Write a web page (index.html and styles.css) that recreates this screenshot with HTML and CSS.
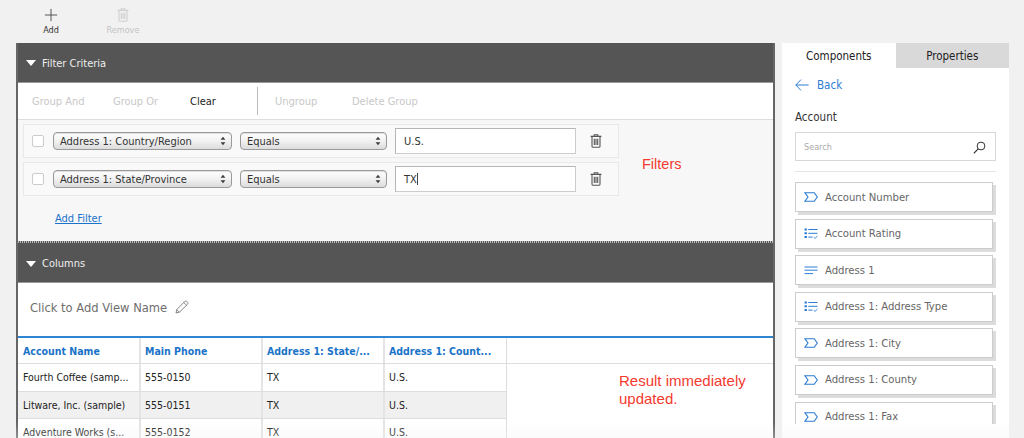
FILE: index.html
```html
<!DOCTYPE html>
<html lang="en">
<head>
<meta charset="utf-8">
<title>View Designer</title>
<link rel="stylesheet" href="styles.css">
</head>
<body>
<svg class="defs" width="0" height="0">
  <symbol id="i-text" viewBox="0 0 14 10"><path d="M.8 .7H10.2L13.3 5 10.2 9.3H.8L4 5Z" fill="none" stroke="#2b7cd3" stroke-width="1.1"/></symbol>
  <symbol id="i-list" viewBox="0 0 14 11"><path d="M.5.5h2.4v2H.5zM.5 4.3h2.4v2H.5zM.5 8.1h2.4v2H.5z" fill="#2b7cd3"/><path d="M4.3 1.5H13.5M4.3 5.3H13.5M4.3 9.1H8.5" fill="none" stroke="#2b7cd3"/><path d="M9.8 9.2l1.3 1.2 2.4-2.4" fill="none" stroke="#2b7cd3" stroke-width=".9"/></symbol>
  <symbol id="i-lines" viewBox="0 0 14 9"><path d="M.5 1H13.5M.5 4.2H13.5M.5 7.6H9" fill="none" stroke="#2b7cd3" stroke-width="1"/></symbol>
  <symbol id="i-trash" viewBox="0 0 12 14"><path d="M4.2 1.9V.8H7.8V1.9M.6 2.4H11.4M2 2.6V12.2Q2 13.3 3.1 13.3H8.9Q10 13.3 10 12.2V2.6" fill="none" stroke="currentColor" stroke-width="1.1"/><path d="M4.3 4.8V11M6 4.8V11M7.7 4.8V11" fill="none" stroke="currentColor" stroke-width="1.1"/></symbol>
  <symbol id="i-updown" viewBox="0 0 7 11"><path d="M3.5.5L6.3 4H.7ZM3.5 10.5L.7 7H6.3Z" fill="#3c3c3c"/></symbol>
</svg>

<header class="toolbar">
  <button class="tool">
    <svg class="tool-icon" viewBox="0 0 16 16"><path d="M8 1V15M1 8H15" fill="none" stroke="#444" stroke-width="1"/></svg>
    <span>Add</span>
  </button>
  <button class="tool tool-off">
    <svg class="tool-icon" viewBox="0 0 12 14"><use href="#i-trash"/></svg>
    <span>Remove</span>
  </button>
</header>

<div class="workspace">
  <main class="designer">
    <section class="bar"><span class="caret"></span>Filter Criteria</section>
    <div class="actions">
      <span class="action off w-and">Group And</span>
      <span class="action off w-or">Group Or</span>
      <span class="action w-clear">Clear</span>
      <span class="action-sep"></span>
      <span class="action off w-ungroup">Ungroup</span>
      <span class="action off">Delete Group</span>
    </div>
    <div class="filters">
      <div class="filter-row">
        <span class="check"></span>
        <div class="select sel-field">Address 1: Country/Region<svg class="updown"><use href="#i-updown"/></svg></div>
        <div class="select sel-op">Equals<svg class="updown"><use href="#i-updown"/></svg></div>
        <div class="value">U.S.</div>
        <svg class="trash"><use href="#i-trash"/></svg>
      </div>
      <div class="filter-row">
        <span class="check"></span>
        <div class="select sel-field">Address 1: State/Province<svg class="updown"><use href="#i-updown"/></svg></div>
        <div class="select sel-op">Equals<svg class="updown"><use href="#i-updown"/></svg></div>
        <div class="value">TX<span class="cursor"></span></div>
        <svg class="trash"><use href="#i-trash"/></svg>
      </div>
      <a class="add-filter" href="#">Add Filter</a>
      <span class="note note-filters">Filters</span>
    </div>
    <div class="dots"></div>
    <section class="bar bar-columns"><span class="caret"></span>Columns</section>
    <div class="view-name">Click to Add View Name
      <svg class="pencil" viewBox="0 0 14 14"><path d="M1 13L1.8 9.6 9.8 1.4Q10.7.6 11.6 1.3L12.7 2.4Q13.4 3.3 12.6 4.2L4.4 12.2ZM1.8 9.6L4.4 12.2M8.8 2.5L11.5 5.2" fill="none" stroke="#777" stroke-width=".9"/></svg>
    </div>
    <div class="grid">
      <div class="grid-row grid-head">
        <div class="cell">Account Name</div><div class="cell">Main Phone</div><div class="cell">Address 1: State/...</div><div class="cell">Address 1: Count...</div>
      </div>
      <div class="grid-row">
        <div class="cell">Fourth Coffee (samp...</div><div class="cell">555-0150</div><div class="cell">TX</div><div class="cell">U.S.</div>
      </div>
      <div class="grid-row grid-alt">
        <div class="cell">Litware, Inc. (sample)</div><div class="cell">555-0151</div><div class="cell">TX</div><div class="cell">U.S.</div>
      </div>
      <div class="grid-row">
        <div class="cell">Adventure Works (s...</div><div class="cell">555-0152</div><div class="cell">TX</div><div class="cell">U.S.</div>
      </div>
      <span class="note note-result">Result immediately<br>updated.</span>
    </div>
  </main>

  <aside class="side">
    <div class="tabs"><div class="tab tab-on">Components</div><div class="tab">Properties</div></div>
    <div class="side-body">
      <a class="back" href="#"><svg class="back-arrow" viewBox="0 0 14 12"><path d="M6 .6L.8 6 6 11.4M.8 6H13.6" fill="none" stroke="#2b7cd3" stroke-width="1"/></svg>Back</a>
      <div class="entity">Account</div>
      <div class="search"><span>Search</span>
        <svg class="search-icon" viewBox="0 0 13 13"><circle cx="8" cy="5" r="3.9" fill="none" stroke="#333" stroke-width="1"/><path d="M5.2 7.8L.8 12.3" fill="none" stroke="#333" stroke-width="1.2"/></svg>
      </div>
      <div class="side-rule"></div>
      <div class="comp"><svg class="c-text"><use href="#i-text"/></svg>Account Number</div>
      <div class="comp"><svg class="c-list"><use href="#i-list"/></svg>Account Rating</div>
      <div class="comp"><svg class="c-lines"><use href="#i-lines"/></svg>Address 1</div>
      <div class="comp"><svg class="c-list"><use href="#i-list"/></svg>Address 1: Address Type</div>
      <div class="comp"><svg class="c-text"><use href="#i-text"/></svg>Address 1: City</div>
      <div class="comp"><svg class="c-text"><use href="#i-text"/></svg>Address 1: County</div>
      <div class="comp"><svg class="c-text"><use href="#i-text"/></svg>Address 1: Fax</div>
    </div>
  </aside>
</div>
<div class="fade"></div>
</body>
</html>
```

FILE: styles.css
```css
* { box-sizing: border-box; }
html, body { margin: 0; height: 438px; overflow: hidden; }
body {
  position: relative;
  background: #f1f1f1;
  font-family: "DejaVu Sans", sans-serif;
  font-stretch: condensed;
  font-size: 11px;
  color: #333;
}
.defs { position: absolute; }

.toolbar { height: 43px; padding-left: 30px; display: flex; gap: 30px; }
.tool {
  width: 42px; padding: 8px 0 0; border: 0; background: none;
  display: flex; flex-direction: column; align-items: center;
  font-family: inherit; font-stretch: condensed; font-size: 9px; color: #333;
}
.tool-off { color: #c4c4c4; }
.tool-icon { width: 14px; height: 14px; margin-bottom: 3px; }
.tool-off .tool-icon { color: #cfcfcf; }

.workspace { display: flex; padding-left: 16px; align-items: flex-start; }
.designer {
  position: relative;
  width: 759px; height: 395px;
  background: #fff;
  border-left: 2px solid #666;
  border-right: 2px solid #666;
  overflow: hidden;
}
.bar {
  height: 40px; background: #555; color: #eee;
  display: flex; align-items: center;
  padding: 1px 0 0 8px; font-size: 11px;
  border-bottom: 1px solid #999;
}
.bar-columns { padding-top: 2px; }
.caret {
  width: 0; height: 0; margin-right: 6px;
  border: 5px solid transparent; border-top: 6px solid #fff; border-bottom: 0;
}
.actions {
  height: 37px; padding-left: 14px;
  display: flex; align-items: center;
  font-size: 11px; color: #222;
  border-bottom: 1px solid #ddd;
}
.action { display: block; }
.off { color: #c8c8c8; }
.w-and { width: 81px; }
.w-or { width: 77px; }
.w-clear { width: 67px; }
.w-ungroup { width: 77px; }
.action-sep { width: 1px; height: 28px; background: #bbb; margin-right: 17px; }

.filters { position: relative; height: 121px; background: #f7f7f7; padding: 4px 0 0 5px; }
.filter-row {
  width: 596px; height: 34px; margin-bottom: 4px;
  display: flex; align-items: center; padding-left: 8px;
  background: #f9f9f9; border: 1px solid #e9e9e9;
}
.check { width: 12px; height: 12px; border: 1px solid #ccc; border-radius: 2px; background: #fff; margin-right: 9px; }
.select {
  position: relative; height: 18px; padding-left: 6px; line-height: 18px;
  border: 1px solid #9a9a9a; border-radius: 4px;
  background: linear-gradient(#fff, #f1f1f1 50%, #dcdcdc);
  box-shadow: inset 0 1px 1px #ddd;
  font-size: 11px; color: #333;
}
.sel-field { width: 179px; margin-right: 8px; }
.sel-op { width: 147px; margin-right: 8px; }
.updown { position: absolute; right: 5px; top: 3px; width: 6px; height: 10px; }
.value {
  width: 181px; height: 26px; padding-left: 8px; line-height: 26px;
  background: #fff; border: 1px solid #b5b5b5; border-bottom-color: #ccc; border-right-color: #ccc;
  font-size: 11px; margin-right: 14px; color: #333;
}
.cursor { display: inline-block; width: 1px; height: 12px; background: #444; vertical-align: -2px; }
.trash { width: 12px; height: 14px; color: #555; }
.add-filter { display: block; margin: 16px 0 0 32px; font-size: 11px; color: #1a73c8; }
.note { position: absolute; color: #f33a2e; font-family: "Liberation Sans", sans-serif; font-stretch: normal; }
.note-filters { left: 624px; top: 36px; font-size: 14.5px; }
.dots { height: 2px; background: repeating-linear-gradient(90deg, #bbb 0 1px, #555 1px 2px); }

.view-name {
  height: 53px; padding: 0 0 5px 12px;
  display: flex; align-items: center; gap: 8px;
  font-size: 12.8px; color: #6e6e6e;
}
.pencil { width: 14px; height: 14px; }

.grid { position: relative; border-top: 2px solid #2f86d0; height: 110px; }
.grid-row { display: flex; height: 27.5px; border-bottom: 1px solid #ddd; width: 100%; }
.grid-head { height: 26px; font-weight: 700; color: #1a73c8; }
.grid-row .cell {
  width: 122px; padding-left: 4px; display: flex; align-items: center;
  border-right: 2px solid #e4e4e4; font-size: 10.5px; white-space: nowrap;
}
.grid-row .cell:first-child { width: 123px; padding-left: 5px; }
.grid-row .cell:nth-child(4) { border-right: 1px solid #ddd; }
.grid-row:not(.grid-head) { width: 489px; color: #222; }
.grid-alt { background: #f0f0f0; }
.note-result { left: 601px; top: 34px; font-size: 15px; line-height: 18px; }

.side { width: 227px; margin-left: 7px; height: 395px; background: #fff; }
.tabs { display: flex; height: 25px; }
.tab { flex: 1; display: flex; align-items: center; justify-content: center; background: #d9d9d9; font-size: 11.5px; color: #222; }
.tab-on { background: #fff; }
.side-body { height: 356px; padding: 0 13px; overflow: hidden; }
.back { display: flex; align-items: center; gap: 8px; height: 33px; color: #2b7cd3; font-size: 11.5px; text-decoration: none; }
.back-arrow { width: 14px; height: 12px; }
.entity { margin-top: 8px; height: 23px; padding-top: 1px; font-size: 11.5px; color: #333; }
.search {
  height: 29px; display: flex; align-items: center; justify-content: space-between;
  border: 1px solid #d8d8d8; padding: 1px 9px 0 8px; font-size: 9px; color: #aaa;
}
.search-icon { width: 13px; height: 13px; }
.side-rule { height: 1px; background: #e6e6e0; margin: 10px 0 10px; }
.comp {
  width: 198px; height: 30px; margin-bottom: 6.6px;
  display: flex; align-items: center;
  border: 1px solid #ccc; background: #fff;
  box-shadow: 3px 3px 0 #dcdcdc;
  font-size: 11.2px; color: #666; padding-left: 8px;
}
.comp svg { width: 14px; margin-right: 7px; }
.c-text { height: 10px; }
.c-list { height: 11px; }
.c-lines { height: 9px; }

.fade {
  position: absolute; left: 0; right: 0; bottom: 0; height: 16px;
  background: linear-gradient(rgba(241,241,241,0), rgba(241,241,241,.3));
}
```
